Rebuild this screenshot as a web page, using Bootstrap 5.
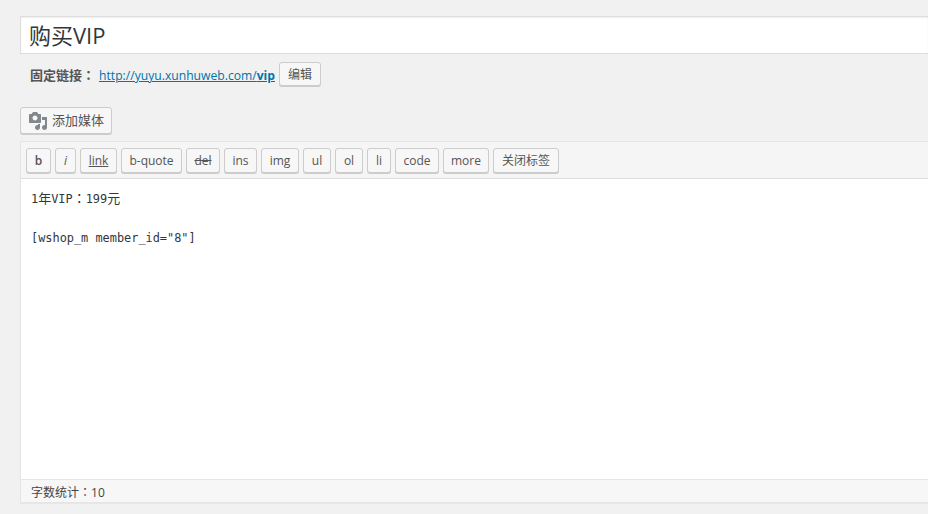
<!DOCTYPE html>
<html lang="zh"><head><meta charset="utf-8"><title>购买VIP</title>
<link href="https://cdn.jsdelivr.net/npm/bootstrap@5.3.0/dist/css/bootstrap.min.css" rel="stylesheet">
<style>
html,body{height:100%;overflow:hidden}
body{background:#f1f1f1;color:#444;font:13px/1.4 "Open Sans","Noto Sans CJK SC",sans-serif}
.edit-wrap{padding:16px 0 0 20px}
.title-box{height:38px;border:1px solid #ddd;border-right:0;background:#fff;box-shadow:inset 0 1px 2px rgba(0,0,0,.07);font-size:22px;line-height:37px;padding:0 8px;color:#32373c;white-space:nowrap}
.slug-row{height:26px;margin-top:8px;padding-left:10px;color:#666;line-height:26px}
.slug-row b{color:#555;font-weight:600}
.tc-mark{font-family:"Noto Sans CJK TC",sans-serif}
.slug-row a{color:#0073aa;margin-left:4px;font-size:12.15px}
.slug-row a strong{font-weight:700}
.wp-btn{display:inline-block;background:#f7f7f7;border:1px solid #ccc;border-radius:3px;box-shadow:0 1px 0 #ccc;color:#555;white-space:nowrap;padding:0;text-align:center}
.slug-edit{width:42px;height:24px;line-height:24px;font-size:12px;margin-left:4px;vertical-align:top;margin-top:0}
.media-row{margin-top:19px}
.media-btn{height:27px;width:92px;line-height:25px;display:flex;align-items:center;gap:4px;padding-left:7px;font-size:13px}
.editor-box{margin-top:7px;border:1px solid #e5e5e5;border-right:0;background:#fff;box-shadow:0 1px 1px rgba(0,0,0,.04)}
.tool-row{height:37px;background:#f5f5f5;border-bottom:1px solid #ddd;padding:6px 0 0 5px;gap:4px}
.tool-row .wp-btn{height:25px;line-height:23px;font-size:12px}
.tag-b{font-weight:600}
.editor-text{height:300px;padding:11px 10px 0;font:11.9px/19.5px "DejaVu Sans Mono","Noto Sans CJK SC",monospace;color:#32373c;white-space:pre}
.cjk-cell{font-size:13px;line-height:0;font-family:"Noto Sans CJK TC",sans-serif}
.count-row{height:23px;background:#f7f7f7;border-top:1px solid #e5e5e5;padding-left:10px;font-size:12px;line-height:23px;color:#444}
</style></head>
<body>
<div class="edit-wrap">
  <div class="title-box">购买VIP</div>
  <div class="slug-row"><b>固定链接<span class="tc-mark" lang="zh-Hant">：</span></b><a href="#">http://yuyu.xunhuweb.com/<strong>vip</strong></a><span class="wp-btn slug-edit">编辑</span></div>
  <div class="media-row"><span class="wp-btn media-btn"><svg width="20" height="20" viewBox="0 0 20 20" aria-hidden="true"><path fill="#82878c" d="M13 11V4c0-.55-.45-1-1-1h-1.670L9 1H5L3.670 3H2c-.55 0-1 .45-1 1v7c0 .55.45 1 1 1h10c.55 0 1-.45 1-1zM7 4.500c1.380 0 2.500 1.120 2.500 2.500S8.380 9.500 7 9.500 4.500 8.380 4.500 7 5.620 4.500 7 4.500zM14 6h5v10.500c0 1.380-1.120 2.500-2.500 2.500S14 17.880 14 16.500s1.120-2.500 2.500-2.500c.17 0 .34.020.5.050V9h-3V6zm-4 8.050V13h2v3.500c0 1.380-1.120 2.500-2.500 2.500S7 17.880 7 16.500 8.120 14 9.500 14c.17 0 .34.020.5.050z"/></svg><span>添加媒体</span></span></div>
  <div class="editor-box">
    <div class="tool-row d-flex">
      <span class="wp-btn tag-b" style="width:25px">b</span>
      <span class="wp-btn fst-italic" style="width:21px">i</span>
      <span class="wp-btn text-decoration-underline" style="width:37px">link</span>
      <span class="wp-btn" style="width:61px">b-quote</span>
      <span class="wp-btn text-decoration-line-through" style="width:34px">del</span>
      <span class="wp-btn" style="width:33px">ins</span>
      <span class="wp-btn" style="width:38px">img</span>
      <span class="wp-btn" style="width:28px">ul</span>
      <span class="wp-btn" style="width:28px">ol</span>
      <span class="wp-btn" style="width:24px">li</span>
      <span class="wp-btn" style="width:44px">code</span>
      <span class="wp-btn" style="width:46px">more</span>
      <span class="wp-btn" style="width:66px">关闭标签</span>
    </div>
    <div class="editor-text">1<span class="cjk-cell">年</span>VIP<span class="cjk-cell" lang="zh-Hant">：</span>199<span class="cjk-cell">元</span>

[wshop_m member_id="8"]</div>
    <div class="count-row">字数统计<span class="tc-mark" lang="zh-Hant">：</span><span>10</span></div>
  </div>
</div>
<script src="https://cdn.jsdelivr.net/npm/bootstrap@5.3.0/dist/js/bootstrap.bundle.min.js"></script>
</body></html>
